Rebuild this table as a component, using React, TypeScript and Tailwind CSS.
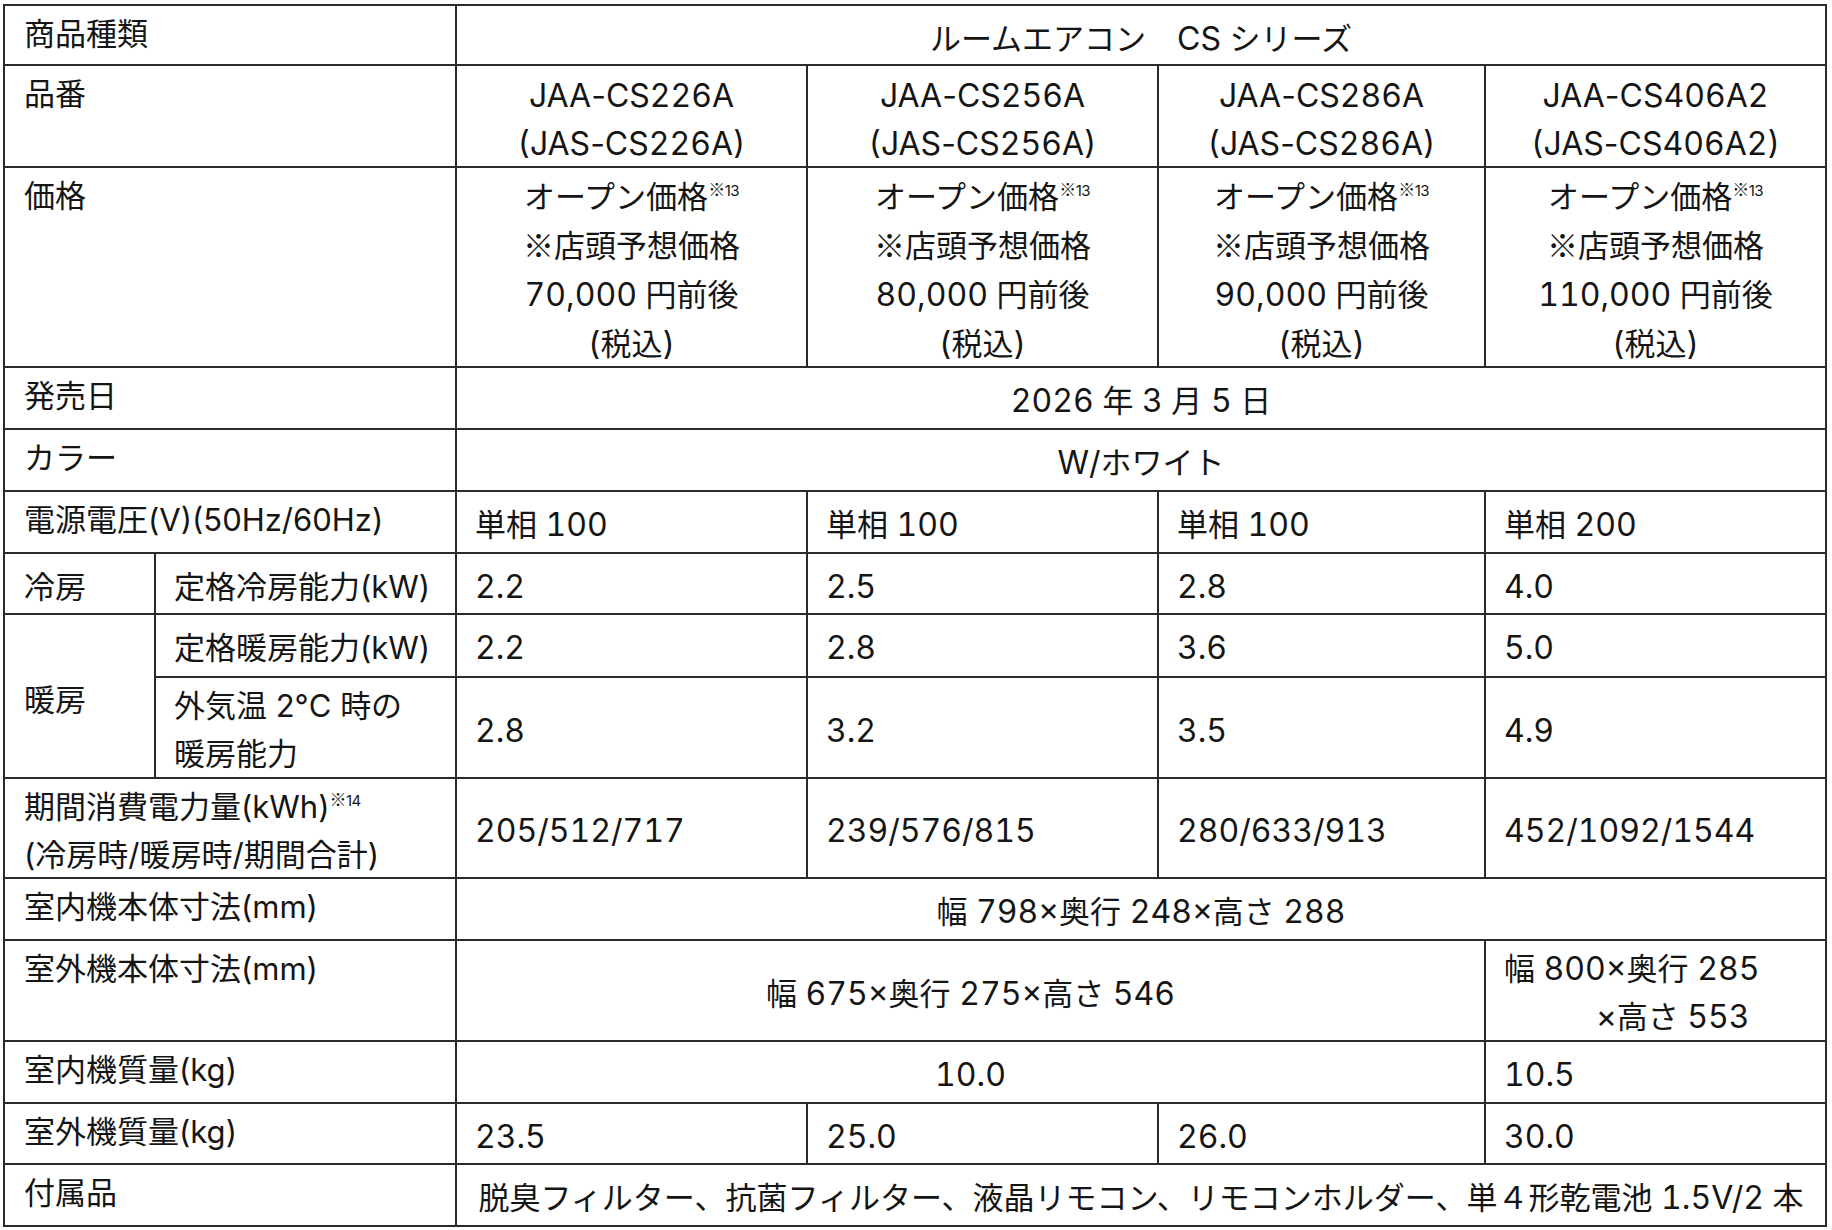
const font = "font-['Noto_Sans_CJK_JP','Noto_Sans',sans-serif]"
const latin = "font-['Inter','Noto_Sans',sans-serif] text-[32px] leading-[0] tabular-nums"
const latinLabel = "font-['Inter','Noto_Sans',sans-serif] text-[31px] leading-[0]"

const models = [
  { no: "JAA-CS226A", sub: "(JAS-CS226A)", price: "70,000" },
  { no: "JAA-CS256A", sub: "(JAS-CS256A)", price: "80,000" },
  { no: "JAA-CS286A", sub: "(JAS-CS286A)", price: "90,000" },
  { no: "JAA-CS406A2", sub: "(JAS-CS406A2)", price: "110,000" },
]

// latin runs get a slightly larger face, like the original document
function T({ s, lbl }: { s: string; lbl?: boolean }) {
  const parts = s.split(/([\x20-\x7E×°]+)/)
  return (
    <>
      {parts.map((p, i) =>
        i % 2 ? (
          <span key={i} className={lbl ? latinLabel : latin}>
            {p.split(/(-)/).map((q, j) =>
              q === "-" ? (
                <span key={j} className="normal-nums">
                  -
                </span>
              ) : (
                q
              )
            )}
          </span>
        ) : (
          p
        )
      )}
    </>
  )
}

const cell = "border-2 border-[#2b2b2b] align-top leading-[48px]"
const label = `${cell} pl-[19px] pt-[2px] text-left`
const left = `${cell} pl-[18px] pt-[7px] text-left`
const center = `${cell} pt-[7px] text-center`
const mid = `${cell} pl-[18px] pt-[2px] !align-middle text-left`

function Note({ n }: { n: string }) {
  return (
    <sup className="text-[17px] -top-[12px] tracking-[-0.5px]">
      ※<span className="font-['Inter',sans-serif] text-[15px]">{n}</span>
    </sup>
  )
}

export default function App() {
  return (
    <div className={`min-h-screen bg-white pl-[3px] pt-[4px] text-[31px] text-[#151515] ${font}`}>
      <table className="w-[1822px] table-fixed border-collapse">
        <colgroup>
          <col className="w-[151px]" />
          <col className="w-[301px]" />
          <col className="w-[351px]" />
          <col className="w-[351px]" />
          <col className="w-[327px]" />
          <col className="w-[341px]" />
        </colgroup>
        <tbody>
          <tr className="h-[60px]">
            <td colSpan={2} className={label}>商品種類</td>
            <td colSpan={4} className={center}>
              <T s="ルームエアコン　CS シリーズ" />
            </td>
          </tr>
          <tr className="h-[102px]">
            <td colSpan={2} className={label}>品番</td>
            {models.map((m) => (
              <td key={m.no} className={`${cell} pt-[4px] text-center`}>
                <div><T s={m.no} /></div>
                <div><T s={m.sub} /></div>
              </td>
            ))}
          </tr>
          <tr className="h-[200px]">
            <td colSpan={2} className={label}>価格</td>
            {models.map((m) => (
              <td key={m.no} className={`${cell} pt-[2px] !leading-[49px] text-center`}>
                <div>
                  オープン価格
                  <Note n="13" />
                </div>
                <div>※店頭予想価格</div>
                <div><T s={`${m.price} 円前後`} /></div>
                <div><T s="(税込)" /></div>
              </td>
            ))}
          </tr>
          <tr className="h-[62px]">
            <td colSpan={2} className={label}>発売日</td>
            <td colSpan={4} className={center}><T s="2026 年 3 月 5 日" /></td>
          </tr>
          <tr className="h-[62px]">
            <td colSpan={2} className={label}>カラー</td>
            <td colSpan={4} className={center}><T s="W/ホワイト" /></td>
          </tr>
          <tr className="h-[62px]">
            <td colSpan={2} className={label}><T lbl s="電源電圧(V)(50Hz/60Hz)" /></td>
            <td className={left}><T s="単相 100" /></td>
            <td className={left}><T s="単相 100" /></td>
            <td className={left}><T s="単相 100" /></td>
            <td className={left}><T s="単相 200" /></td>
          </tr>
          <tr className="h-[61px]">
            <td className={`${label} !pt-[7px]`}>冷房</td>
            <td className={`${label} !pt-[7px] !pl-[18px]`}><T lbl s="定格冷房能力(kW)" /></td>
            <td className={left}><T s="2.2" /></td>
            <td className={left}><T s="2.5" /></td>
            <td className={left}><T s="2.8" /></td>
            <td className={left}><T s="4.0" /></td>
          </tr>
          <tr className="h-[63px]">
            <td rowSpan={2} className={`${mid} !pl-[19px] !pt-[4px]`}>暖房</td>
            <td className={`${label} !pt-[7px] !pl-[18px]`}><T lbl s="定格暖房能力(kW)" /></td>
            <td className={left}><T s="2.2" /></td>
            <td className={left}><T s="2.8" /></td>
            <td className={left}><T s="3.6" /></td>
            <td className={left}><T s="5.0" /></td>
          </tr>
          <tr className="h-[101px]">
            <td className={`${label} !pl-[18px]`}>
              <div><T lbl s="外気温 2°C 時の" /></div>
              <div>暖房能力</div>
            </td>
            <td className={mid}><T s="2.8" /></td>
            <td className={mid}><T s="3.2" /></td>
            <td className={mid}><T s="3.5" /></td>
            <td className={mid}><T s="4.9" /></td>
          </tr>
          <tr className="h-[100px]">
            <td colSpan={2} className={label}>
              <div>
                <T lbl s="期間消費電力量(kWh)" />
                <Note n="14" />
              </div>
              <div><T lbl s="(冷房時/暖房時/期間合計)" /></div>
            </td>
            <td className={mid}><T s="205/512/717" /></td>
            <td className={mid}><T s="239/576/815" /></td>
            <td className={mid}><T s="280/633/913" /></td>
            <td className={mid}><T s="452/1092/1544" /></td>
          </tr>
          <tr className="h-[62px]">
            <td colSpan={2} className={label}><T lbl s="室内機本体寸法(mm)" /></td>
            <td colSpan={4} className={center}><T s="幅 798×奥行 248×高さ 288" /></td>
          </tr>
          <tr className="h-[101px]">
            <td colSpan={2} className={label}><T lbl s="室外機本体寸法(mm)" /></td>
            <td colSpan={3} className={`${cell} pt-[2px] !align-middle text-center`}>
              <T s="幅 675×奥行 275×高さ 546" />
            </td>
            <td className={`${left} !pt-[2px]`}>
              <div><T s="幅 800×奥行 285" /></div>
              <div className="pl-[92px]"><T s="×高さ 553" /></div>
            </td>
          </tr>
          <tr className="h-[62px]">
            <td colSpan={2} className={label}><T lbl s="室内機質量(kg)" /></td>
            <td colSpan={3} className={center}><T s="10.0" /></td>
            <td className={left}><T s="10.5" /></td>
          </tr>
          <tr className="h-[61px]">
            <td colSpan={2} className={label}><T lbl s="室外機質量(kg)" /></td>
            <td className={left}><T s="23.5" /></td>
            <td className={left}><T s="25.0" /></td>
            <td className={left}><T s="26.0" /></td>
            <td className={left}><T s="30.0" /></td>
          </tr>
          <tr className="h-[62px]">
            <td colSpan={2} className={label}>付属品</td>
            <td colSpan={4} className={center}>
              <T s="脱臭フィルター、抗菌フィルター、液晶リモコン、リモコンホルダー、単４形乾電池 1.5V/2 本" />
            </td>
          </tr>
        </tbody>
      </table>
    </div>
  )
}
